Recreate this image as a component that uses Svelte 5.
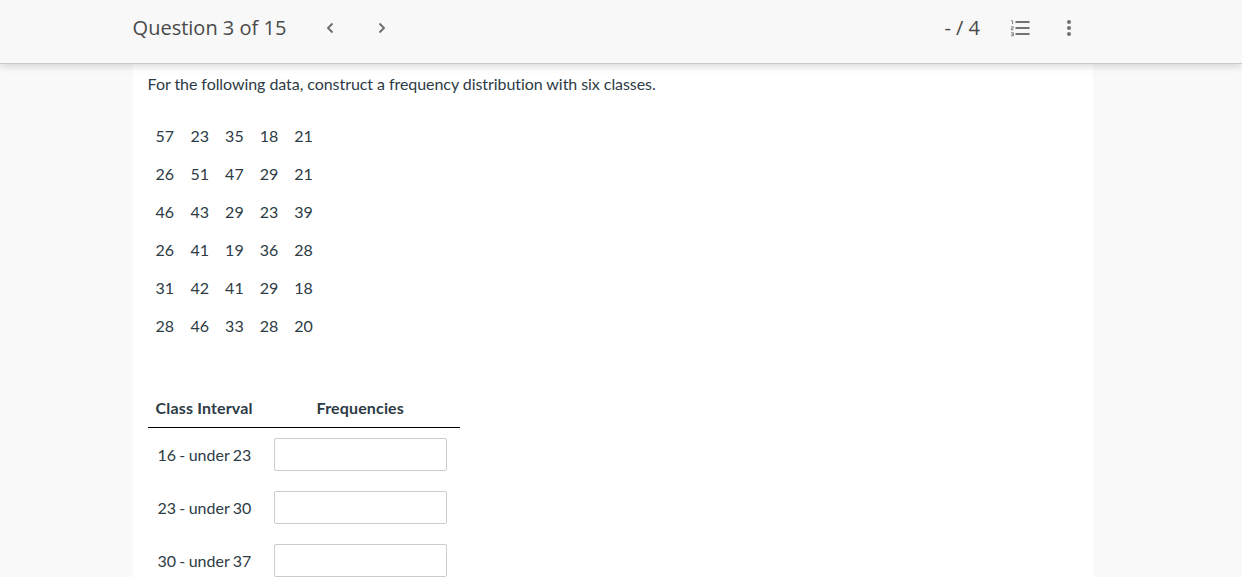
<script>
  const rows = [
    [57, 23, 35, 18, 21],
    [26, 51, 47, 29, 21],
    [46, 43, 29, 23, 39],
    [26, 41, 19, 36, 28],
    [31, 42, 41, 29, 18],
    [28, 46, 33, 28, 20]
  ];
  const intervals = ['16 - under 23', '23 - under 30', '30 - under 37'];
</script>

<div class="page">
  <header class="bar">
    <div class="bar-inner">
      <div class="left">
        <h1>Question 3 of 15</h1>
        <svg class="chev first" width="10" height="14" viewBox="0 0 10 14"><path d="M7.5 2.5 3 7l4.5 4.5" /></svg>
        <svg class="chev second" width="10" height="14" viewBox="0 0 10 14"><path d="M2.5 2.5 7 7l-4.5 4.5" /></svg>
      </div>
      <div class="right">
        <span class="score">- / 4</span>
        <svg class="list" width="20" height="17" viewBox="0 0 20 17">
          <rect x="5.5" y="1" width="14" height="2" />
          <rect x="5.5" y="7" width="14" height="2" />
          <rect x="5.5" y="13" width="14" height="2" />
          <path class="num" d="M1 .8h1.6v3.4M1 6.8h2.4v1L1 9.2v.6h2.4M1 12.8h2.4v3H1M1.6 14.3h1.8" />
        </svg>
        <svg class="dots" width="6" height="18" viewBox="0 0 6 18">
          <circle cx="3" cy="3" r="2" /><circle cx="3" cy="9" r="2" /><circle cx="3" cy="15" r="2" />
        </svg>
      </div>
    </div>
  </header>

  <main class="card">
    <p class="prompt">For the following data, construct a frequency distribution with six classes.</p>

    <table class="data">
      <tbody>
        {#each rows as row}
          <tr>{#each row as n}<td>{n}</td>{/each}</tr>
        {/each}
      </tbody>
    </table>

    <table class="answers">
      <thead>
        <tr><th class="c1">Class Interval</th><th class="c2">Frequencies</th></tr>
      </thead>
      <tbody>
        {#each intervals as label}
          <tr>
            <td class="lab">{label}</td>
            <td class="inp"><input type="text" aria-label={label} /></td>
          </tr>
        {/each}
      </tbody>
    </table>
  </main>
</div>

<style>
  :global(body) { margin: 0; background: #f9f9f9; overflow: hidden; }
  .page { height: 577px; overflow: hidden; font-family: Lato, sans-serif; color: #2d3b45; font-size: 16px; position: relative; }
  .bar { height: 63px; background: #f8f8f8; border-bottom: 1px solid #c9c9c9; box-shadow: 0 2px 8px rgba(0,0,0,.16); position: relative; z-index: 1; }
  .bar-inner { display: flex; justify-content: space-between; align-items: center; height: 56px; margin-left: 133px; width: 943px; }
  .left, .right { display: flex; align-items: center; }
  h1 { margin: 0 0 0 -.4px; font: 400 20px/28px "Open Sans", sans-serif; color: #494949; width: 153.4px; white-space: nowrap; }
  .chev { fill: none; stroke: #6a6a6a; stroke-width: 1.8; }
  .chev.first { margin-left: 39px; }
  .chev.second { margin-left: 42px; }
  .score { font: 400 20px/28px "Open Sans", sans-serif; color: #494949; margin-right: 30px; }
  .list rect { fill: #727272; }
  .num { fill: none; stroke: #727272; stroke-width: .9; }
  .list { margin-right: 36px; }
  .dots { fill: #727272; margin-right: 4px; }

  .card { position: absolute; top: 64px; left: 133px; width: 960px; height: 513px; background: #fff; padding: 0 15px; box-sizing: border-box; }
  .prompt { margin: 10px 0 0 -.4px; line-height: 20px; letter-spacing: -.06px; }
  table { border-collapse: collapse; }
  .data { margin-top: 23px; }
  .data td { padding: 0 8px; height: 38px; line-height: 20px; }
  .data td:first-child { padding-left: 7.6px; padding-right: 8.4px; }

  .answers { margin-top: 44px; width: 312px; table-layout: fixed; }
  th { font-weight: 700; padding: 0 8px 1px; height: 37px; border-bottom: 1px solid #000; }
  .c1 { width: 97px; text-align: left; letter-spacing: .15px; white-space: nowrap; padding-left: 7.6px; }
  .c2 { text-align: center; letter-spacing: .15px; padding-left: 0; padding-right: 0; }
  .answers td { height: 53px; padding: 0; }
  .lab { text-align: left; padding-left: 9.4px !important; white-space: nowrap; word-spacing: -.7px; }
  .inp { padding-left: 13px !important; }
  input { display: block; width: 173px; height: 33px; box-sizing: border-box; border: 1px solid #c7cdd1; border-radius: 2px; background: #fff; padding: 0; }
</style>
